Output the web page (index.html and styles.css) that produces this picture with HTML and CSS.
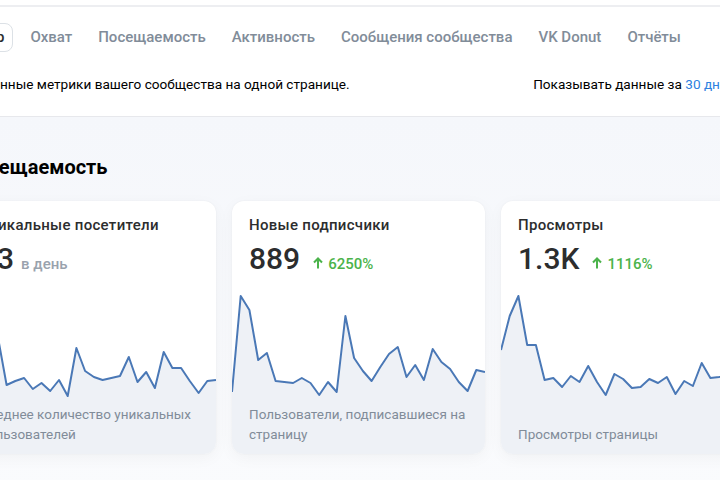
FILE: index.html
```html
<!DOCTYPE html>
<html lang="ru">
<head>
    <meta charset="UTF-8">
    <title>Статистика сообщества</title>

    <link rel="stylesheet" href="styles.css">
</head>
<body>

<div class="page">
    <div class="topbar"></div>

    <header class="head">
        <nav class="tabs">
            <span class="tab tab-active">Обзор</span>
            <span class="tab">Охват</span>
            <span class="tab">Посещаемость</span>
            <span class="tab">Активность</span>
            <span class="tab">Сообщения сообщества</span>
            <span class="tab">VK Donut</span>
            <span class="tab">Отчёты</span>
        </nav>
        <div class="intro">
            <p class="intro-text">Собранные метрики вашего сообщества на одной странице.</p>
            <p class="period">Показывать данные за <a href="#">30 дней</a></p>
        </div>
    </header>

    <section class="block">
        <h2 class="block-title">Посещаемость</h2>

        <div class="cards">
            <div class="card">
                <div class="card-head">
                    <div class="card-title">Уникальные посетители</div>
                    <div class="card-value">43 <span class="per">в день</span></div>
                </div>
                <svg class="chart" viewBox="0 0 253 110" preserveAspectRatio="none">
                    <path class="chart-fill" d="M0,110 L0,60 8.7,40 17.4,70 26.2,55 34.9,48 43.6,96 52.3,92 61.1,89 69.8,100 78.5,94 87.2,102 96,91 104.7,107 113.4,59 122.1,82 130.9,88 139.6,91 148.3,89 157,87 165.8,68 174.5,93 183.2,83 191.9,99 200.7,63 209.4,79 218.1,79 226.8,92 235.6,104 244.3,92 253,91 L253,110 Z"/>
                    <polyline class="chart-line" points="0,60 8.7,40 17.4,70 26.2,55 34.9,48 43.6,96 52.3,92 61.1,89 69.8,100 78.5,94 87.2,102 96,91 104.7,107 113.4,59 122.1,82 130.9,88 139.6,91 148.3,89 157,87 165.8,68 174.5,93 183.2,83 191.9,99 200.7,63 209.4,79 218.1,79 226.8,92 235.6,104 244.3,92 253,91"/>
                </svg>
                <div class="card-foot">Среднее количество уникальных пользователей</div>
            </div>

            <div class="card">
                <div class="card-head">
                    <div class="card-title">Новые подписчики</div>
                    <div class="card-value">889
                        <span class="growth">
                            <svg class="arrow" viewBox="0 0 10 12"><path d="M5 11.5V1.5M1 5.5L5 1.5L9 5.5"/></svg>6250%
                        </span>
                    </div>
                </div>
                <svg class="chart" viewBox="0 0 253 110" preserveAspectRatio="none">
                    <path class="chart-fill" d="M0,110 L0,103 8.7,7 17.4,21 26.2,71 34.9,64 43.6,92 52.3,93 61.1,94 69.8,89 78.5,94 87.2,106 96,93 104.7,103 113.4,27 122.1,69 130.9,82 139.6,92 148.3,78 157,65 165.8,58 174.5,88 183.2,76 191.9,91 200.7,60 209.4,73 218.1,80 226.8,93 235.6,102 244.3,81 253,83 L253,110 Z"/>
                    <polyline class="chart-line" points="0,103 8.7,7 17.4,21 26.2,71 34.9,64 43.6,92 52.3,93 61.1,94 69.8,89 78.5,94 87.2,106 96,93 104.7,103 113.4,27 122.1,69 130.9,82 139.6,92 148.3,78 157,65 165.8,58 174.5,88 183.2,76 191.9,91 200.7,60 209.4,73 218.1,80 226.8,93 235.6,102 244.3,81 253,83"/>
                </svg>
                <div class="card-foot">Пользователи, подписавшиеся на страницу</div>
            </div>

            <div class="card">
                <div class="card-head">
                    <div class="card-title">Просмотры</div>
                    <div class="card-value">1.3K
                        <span class="growth">
                            <svg class="arrow" viewBox="0 0 10 12"><path d="M5 11.5V1.5M1 5.5L5 1.5L9 5.5"/></svg>1116%
                        </span>
                    </div>
                </div>
                <svg class="chart" viewBox="0 0 253 110" preserveAspectRatio="none">
                    <path class="chart-fill" d="M0,110 L0,61 8.7,27 17.4,7 26.2,56 34.9,56 43.6,91 52.3,89 61.1,98 69.8,87 78.5,93 87.2,77 96,93 104.7,106 113.4,85 122.1,90 130.9,99 139.6,98 148.3,90 157,94 165.8,88 174.5,105 183.2,92 191.9,97 200.7,74 209.4,89 218.1,88 226.8,85 235.6,95 244.3,90 253,88 L253,110 Z"/>
                    <polyline class="chart-line" points="0,61 8.7,27 17.4,7 26.2,56 34.9,56 43.6,91 52.3,89 61.1,98 69.8,87 78.5,93 87.2,77 96,93 104.7,106 113.4,85 122.1,90 130.9,99 139.6,98 148.3,90 157,94 165.8,88 174.5,105 183.2,92 191.9,97 200.7,74 209.4,89 218.1,88 226.8,85 235.6,95 244.3,90 253,88"/>
                </svg>
                <div class="card-foot">Просмотры страницы</div>
            </div>
        </div>
    </section>
</div>

</body>
</html>
```

FILE: styles.css
```css
body {
    margin: 0;
    overflow: hidden;
    background: #fff;
    font-family: Roboto, "Noto Sans", Arial, sans-serif;
    color: #000;
}
.page {
    margin-left: -37px;
    width: 900px;
}
.topbar {
    height: 5px;
    border-bottom: 2px solid #edeef1;
}
.head {
    padding: 16px 0 23px;
    border-bottom: 1px solid #e7e8ec;
}
.tabs {
    display: flex;
    align-items: center;
    gap: 26px;
    margin-left: -11px;
    height: 29px;
}
.tab {
    font-size: 15px;
    font-weight: 500;
    line-height: 17px;
    color: #818c99;
}
.tab-active {
    padding: 5px 8px;
    margin-right: -9px;
    border: 1px solid #dce1e6;
    border-radius: 8px;
    color: #2c2d2e;
    background: #fff;
}
.intro {
    display: flex;
    justify-content: space-between;
    width: 772px;
    margin-top: 23px;
    font-size: 13.6px;
    line-height: 18px;
}
.intro p {
    margin: 0;
}
.intro-text {
    margin-left: -2px !important;
}
.period a {
    color: #2d81e0;
    text-decoration: none;
}
.block {
    padding: 38px 0 40px;
    background: linear-gradient(#f5f7fb, #fafbfd);
}
.block-title {
    margin: 0 0 22px;
    font-size: 20px;
    font-weight: 700;
    line-height: 24px;
}
.cards {
    display: flex;
    gap: 16px;
}
.card {
    display: flex;
    flex-direction: column;
    width: 253px;
    height: 253px;
    border-radius: 12px;
    background: #fff;
    overflow: hidden;
    box-shadow: 0 4px 16px rgba(0, 0, 0, 0.04), 0 0 2px rgba(0, 0, 0, 0.05);
}
.card-head {
    padding: 16px 16px 0 17px;
}
.card-title {
    font-size: 15px;
    font-weight: 500;
    line-height: 16px;
    letter-spacing: 0.3px;
    color: #2c2d2e;
}
.card-value {
    display: flex;
    align-items: baseline;
    margin-top: 10px;
    font-size: 30px;
    font-weight: 500;
    line-height: 32px;
    color: #2c2d2e;
}
.per {
    margin-left: 7px;
    font-size: 15px;
    color: #99a2ad;
}
.growth {
    margin-left: 13px;
    font-size: 15px;
    color: #4bb34b;
}
.arrow {
    width: 10px;
    height: 12px;
    margin-right: 5px;
    fill: none;
    stroke: #4bb34b;
    stroke-width: 2;
}
.chart {
    display: block;
    width: 253px;
    height: 110px;
    margin-top: 9px;
}
.chart-fill {
    fill: #eef1f6;
}
.chart-line {
    fill: none;
    stroke: #4a78b6;
    stroke-width: 2;
    stroke-linejoin: round;
}
.card-foot {
    flex: 1;
    display: flex;
    align-items: flex-end;
    padding: 0 16px 10px 17px;
    background: #eef1f6;
    font-size: 13.5px;
    line-height: 20px;
    color: #818c99;
}
```
